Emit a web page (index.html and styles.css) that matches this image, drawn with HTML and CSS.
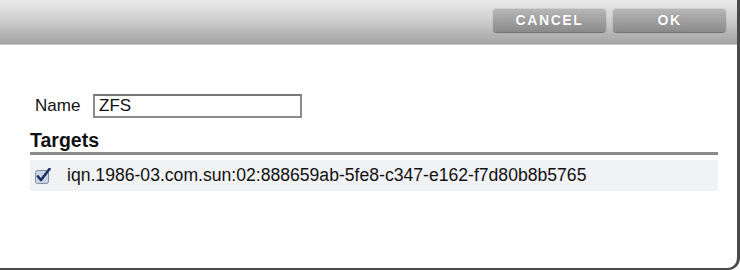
FILE: index.html
```html
<!DOCTYPE html>
<html lang="en">
    <head>
        <meta charset="UTF-8" />
        <title>Target Group</title>
        <link rel="stylesheet" href="styles.css">
    </head>
    <body>
        <div class="dialog">
            <div class="toolbar">
                <div class="btn">CANCEL</div>
                <div class="btn">OK</div>
            </div>
            <div class="content">
                <div class="name-row">
                    <label class="name-label" for="name">Name</label>
                    <input class="name-input" id="name" type="text" value="ZFS" />
                </div>
                <h2 class="section-title">Targets</h2>
                <ul class="targets">
                    <li class="target">
                        <svg class="check" width="16" height="16" viewBox="0 0 16 16">
                            <rect x="0.5" y="2.5" width="13" height="13" rx="2" fill="#c9d3e3" stroke="#7f8fa8" />
                            <path d="M3 8.5 L6 12 L14.5 1" fill="none" stroke="#1c2f63" stroke-width="2.6" stroke-linecap="round" stroke-linejoin="round" />
                        </svg>
                        <span class="target-name">iqn.1986-03.com.sun:02:888659ab-5fe8-c347-e162-f7d80b8b5765</span>
                    </li>
                </ul>
            </div>
        </div>
    </body>
</html>
```

FILE: styles.css
```css
* {
    margin: 0;
    padding: 0;
    box-sizing: border-box;
}
body {
    background: #ffffff;
    font-family: "Liberation Sans", Arial, sans-serif;
}
.dialog {
    width: 740px;
    height: 270px;
    background: #ffffff;
    border-right: 3px solid #4a4a4a;
    border-bottom: 2px solid #4a4a4a;
    border-bottom-right-radius: 12px;
    overflow: hidden;
}
.toolbar {
    height: 45px;
    display: flex;
    justify-content: flex-end;
    align-items: flex-start;
    gap: 7px;
    padding: 8px 11px 0 0;
    background: linear-gradient(#ebebeb, #d2d2d2 40%, #a3a3a3);
    border-bottom: 1px solid #c8c8c8;
}
.btn {
    width: 113px;
    height: 24px;
    display: flex;
    align-items: center;
    justify-content: center;
    color: #ffffff;
    font-size: 14px;
    font-weight: bold;
    letter-spacing: 1.6px;
    text-shadow: 0 0 1px #777;
    border-radius: 4px;
    background: linear-gradient(#b9b9b9, #9d9d9d 60%, #8a8a8a);
    box-shadow: inset 0 1px 0 #d0d0d0, 0 1px 1px #6e6e6e;
}
.content {
    padding: 49px 19px 0 30px;
}
.name-row {
    display: flex;
    align-items: center;
    padding-left: 5px;
}
.name-label {
    font-size: 17px;
    color: #111;
    width: 58px;
}
.name-input {
    width: 209px;
    height: 24px;
    border: 2px solid #8c8c8c;
    border-top-color: #777;
    padding: 0 4px;
    font-family: "Liberation Sans", Arial, sans-serif;
    font-size: 17px;
    color: #111;
    outline: none;
}
.section-title {
    margin-top: 11px;
    font-size: 19.5px;
    font-weight: bold;
    color: #111;
    line-height: 22px;
    padding-bottom: 1px;
    border-bottom: 3px solid #8a8a8a;
}
.targets {
    list-style: none;
    margin-top: 5px;
}
.target {
    height: 31px;
    display: flex;
    align-items: center;
    background: #f1f2f4;
    padding-left: 5px;
}
.check {
    margin-right: 16px;
}
.target-name {
    font-size: 17.6px;
    color: #111;
}
```
